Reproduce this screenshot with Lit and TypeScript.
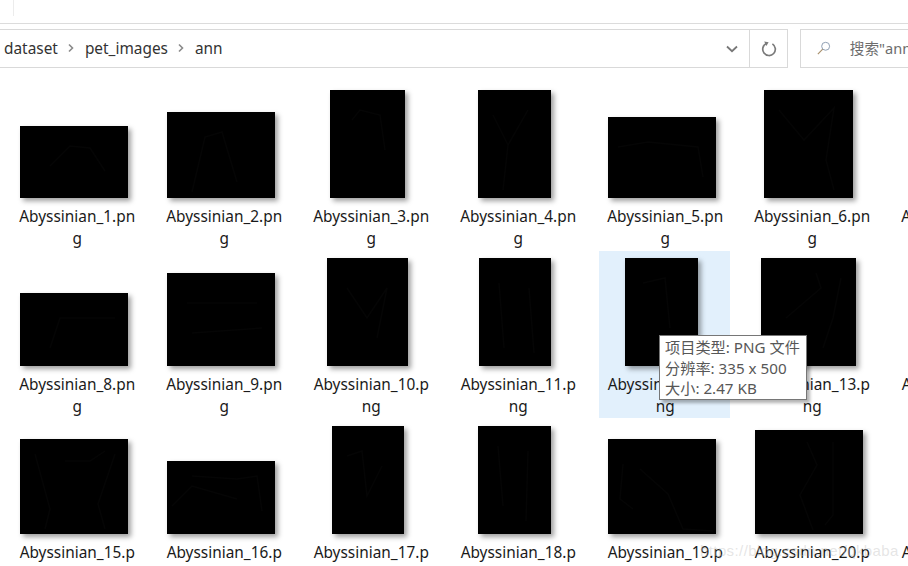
import { LitElement, html, css, svg } from "lit";
import { customElement } from "lit/decorators.js";

interface Thumb { n: number; w: number; h: number; d: string; }

const thumbs: Thumb[] = [
  { n: 1, w: 108, h: 72, d: "M30 40 L50 20 L70 22 L85 45" },
  { n: 2, w: 108, h: 86, d: "M25 80 L38 25 L55 20 L70 70" },
  { n: 3, w: 75, h: 108, d: "M22 30 L30 20 L50 25 L55 60" },
  { n: 4, w: 73, h: 108, d: "M15 25 L30 55 L50 20 M30 55 L25 100" },
  { n: 5, w: 108, h: 81, d: "M10 30 L40 25 L90 30 L95 60" },
  { n: 6, w: 89, h: 108, d: "M15 20 L40 50 L70 18 L62 70 L70 100" },
  { n: 7, w: 75, h: 108, d: "" },
  { n: 8, w: 108, h: 73, d: "M30 55 L40 25 L95 25" },
  { n: 9, w: 108, h: 93, d: "M20 30 L90 30 M25 60 L95 55" },
  { n: 10, w: 81, h: 108, d: "M20 30 L40 60 L60 30 L50 80" },
  { n: 11, w: 72, h: 108, d: "M20 25 L25 90 M50 30 L55 95" },
  { n: 12, w: 73, h: 108, d: "M18 25 L40 20 L45 70" },
  { n: 13, w: 95, h: 108, d: "M55 15 L60 30 L25 60 M80 20 L72 60 L62 90" },
  { n: 14, w: 0, h: 0, d: "" },
  { n: 15, w: 108, h: 95, d: "M15 15 L30 70 L25 90 M45 22 L70 22 L85 12 M95 15 L78 65 L85 90" },
  { n: 16, w: 108, h: 73, d: "M25 15 L70 18 L90 15 L95 50 M5 45 L25 25 L70 38" },
  { n: 17, w: 72, h: 108, d: "M15 30 L30 25 L35 70 L50 40" },
  { n: 18, w: 73, h: 108, d: "M20 20 L25 80 M50 25 L48 95" },
  { n: 19, w: 108, h: 95, d: "M15 25 L12 60 L25 70 M32 30 L60 55 L75 90 L105 92" },
  { n: 20, w: 108, h: 104, d: "M52 12 L62 35 L45 65 L58 100 M78 12 L78 85 L70 95" },
  { n: 21, w: 75, h: 81, d: "" },
];

@customElement("app-root")
export class AppRoot extends LitElement {
  static styles = css`
    :host {
      display: block;
      position: relative;
      width: 908px;
      height: 566px;
      overflow: hidden;
      background: #fff;
      font-family: "Noto Sans", "Noto Sans CJK SC", sans-serif;
      color: #1a1a1a;
    }
    .ribbon {
      height: 23px;
      border-bottom: 1px solid #dcdcdc;
      box-sizing: content-box;
    }
    .ribbon-tick {
      width: 1px;
      height: 16px;
      margin-left: 13px;
      background: #ececec;
    }
    .navbar {
      display: flex;
      gap: 12px;
      margin-top: 5px;
      height: 39px;
    }
    .address {
      flex: none;
      width: 789px;
      margin-left: -1px;
      box-sizing: border-box;
      display: flex;
      border: 1px solid #d9d9d9;
    }
    .crumbs {
      flex: 1;
      display: flex;
      align-items: center;
      padding: 0 0 1px 4px;
      box-sizing: border-box;
      font-size: 15.4px;
      color: #333;
    }
    .crumb-sep {
      width: 27px;
      display: flex;
      justify-content: center;
    }
    .drop {
      width: 36px;
      display: flex;
      align-items: center;
      justify-content: center;
      padding-left: 1px;
      box-sizing: border-box;
    }
    .refresh {
      width: 38px;
      box-sizing: border-box;
      border-left: 1px solid #d9d9d9;
      display: flex;
      align-items: center;
      justify-content: center;
    }
    .search {
      flex: 1;
      min-width: 0;
      margin-right: -10px;
      border: 1px solid #d9d9d9;
      display: flex;
      align-items: center;
      padding: 0 0 2px 16px;
      gap: 19px;
      font-size: 14.6px;
      color: #6d6d6d;
      white-space: nowrap;
      overflow: hidden;
    }
    .grid {
      display: grid;
      grid-template-columns: repeat(7, 131px);
      grid-auto-rows: 167px;
      column-gap: 16px;
      row-gap: 1px;
      padding: 15px 0 0 11px;
      width: 1040px;
    }
    .cell {
      box-sizing: border-box;
      padding-top: 7px;
    }
    .cell.hot {
      background: #e2f0fc;
    }
    .frame {
      height: 108px;
      padding-right: 5.5px;
      display: flex;
      align-items: flex-end;
      justify-content: center;
    }
    .thumb {
      display: block;
      background: #000;
      box-shadow: 3px 3px 5px rgba(0, 0, 0, 0.38);
    }
    .thumb path {
      fill: none;
      stroke: #050505;
      stroke-width: 1.5;
    }
    .label {
      margin-top: 8px;
      padding: 0 5px 0 6.5px;
      font-size: 15.4px;
      line-height: 21.5px;
      text-align: center;
      word-break: break-all;
      color: #1a1a1a;
    }
    .tip {
      position: absolute;
      left: 659px;
      top: 335px;
      width: 148px;
      height: 65px;
      box-sizing: border-box;
      border: 1px solid #767676;
      background: #fff;
      box-shadow: 3px 3px 3px rgba(0, 0, 0, 0.3);
      padding: 1px 0 0 5px;
      font-size: 15.2px;
      line-height: 20.5px;
      color: #575757;
      white-space: nowrap;
    }
    .mark {
      position: absolute;
      left: 700px;
      top: 541px;
      font-family: "Liberation Sans", sans-serif;
      font-size: 15px;
      line-height: 20px;
      letter-spacing: 0.4px;
      color: rgba(190, 190, 190, 0.4);
      white-space: nowrap;
    }
  `;

  private chevron() {
    return html`<svg width="8" height="10" viewBox="0 0 8 10">
      <path d="M2 1.5 L5.5 5 L2 8.5" fill="none" stroke="#8a8a8a" stroke-width="1.6" />
    </svg>`;
  }

  private thumb(t: Thumb) {
    if (!t.w) return html`<div class="frame"></div>`;
    return html`<div class="frame">
      <svg class="thumb" width=${t.w} height=${t.h} viewBox="0 0 ${t.w} ${t.h}">
        ${t.d ? svg`<path d=${t.d} />` : ""}
      </svg>
    </div>`;
  }

  render() {
    return html`
      <div class="ribbon"><div class="ribbon-tick"></div></div>
      <div class="navbar">
        <div class="address">
          <div class="crumbs">
            <span>dataset</span>
            <span class="crumb-sep">${this.chevron()}</span>
            <span>pet_images</span>
            <span class="crumb-sep">${this.chevron()}</span>
            <span>ann</span>
          </div>
          <div class="drop">
            <svg width="12" height="8" viewBox="0 0 12 8">
              <path d="M1 1.5 L6 6.2 L11 1.5" fill="none" stroke="#777" stroke-width="1.8" />
            </svg>
          </div>
          <div class="refresh">
            <svg width="16" height="16" viewBox="0 0 16 16">
              <path d="M5.2 2.6 A6.3 6.3 0 1 0 11.4 2.9" fill="none" stroke="#7a7a7a" stroke-width="1.7" />
              <path d="M3.2 0.6 L7.6 1.2 L5.4 4.9 Z" fill="#7a7a7a" />
            </svg>
          </div>
        </div>
        <div class="search">
          <svg width="16" height="16" viewBox="0 0 16 16">
            <circle cx="10" cy="6" r="4.6" fill="none" stroke="#8a9bb0" stroke-width="1.1" />
            <path d="M6.6 9.4 L1 15" fill="none" stroke="#a88f6a" stroke-width="1.3" />
          </svg>
          <span>搜索"ann"</span>
        </div>
      </div>
      <div class="grid">
        ${thumbs.map(
          (t) => html`<div class="cell ${t.n === 12 ? "hot" : ""}">
            ${this.thumb(t)}
            <div class="label">Abyssinian_${t.n}.png</div>
          </div>`
        )}
      </div>
      <div class="tip">
        <div>项目类型: PNG 文件</div>
        <div>分辨率: 335 x 500</div>
        <div>大小: 2.47 KB</div>
      </div>
      <div class="mark">https://blog.csdn.net/qkbaba</div>
    `;
  }
}
